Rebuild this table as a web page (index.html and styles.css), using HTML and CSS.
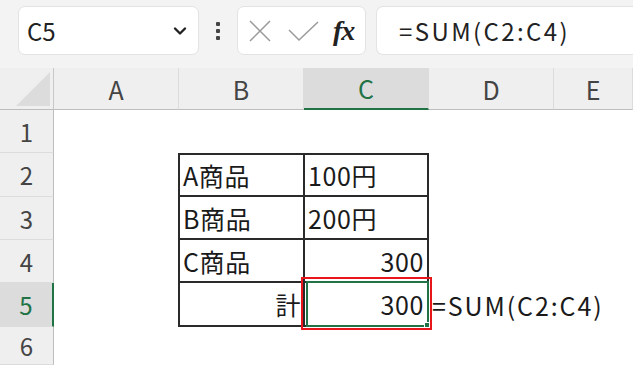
FILE: index.html
```html
<!DOCTYPE html>
<html lang="ja">
<head>
<meta charset="utf-8">
<link rel="stylesheet" href="styles.css">
</head>
<body>
<div class="toolbar">
  <div class="namebox">
    <span class="name">C5</span>
    <svg class="chev" width="14" height="10" viewBox="0 0 14 10"><path d="M2 2.5 L7 7.5 L12 2.5" fill="none" stroke="#222" stroke-width="2.4" stroke-linecap="round" stroke-linejoin="round"/></svg>
  </div>
  <div class="dots"><span></span><span></span><span></span></div>
  <div class="fxbox">
    <svg width="24" height="24" viewBox="0 0 24 24"><path d="M2 2 L22 22 M22 2 L2 22" stroke="#9a9a9a" stroke-width="1.5" fill="none"/></svg>
    <svg width="31" height="22" viewBox="0 0 31 22"><path d="M1 10 L11 20 L30 2" stroke="#9a9a9a" stroke-width="1.5" fill="none"/></svg>
    <span class="fx">fx</span>
  </div>
  <div class="formula">=SUM(C2:C4)</div>
</div>
<div class="sheet">
  <div class="corner"><div class="tri"></div></div>
  <div class="colh">A</div>
  <div class="colh">B</div>
  <div class="colh sel">C</div>
  <div class="colh">D</div>
  <div class="colh">E</div>

  <div class="rowh">1</div>
  <div class="cell"></div><div class="cell"></div><div class="cell"></div><div class="cell"></div><div class="cell"></div>

  <div class="rowh">2</div>
  <div class="cell"></div>
  <div class="cell t tb tl tt">A商品</div>
  <div class="cell t tb tl tt tr">100円</div>
  <div class="cell"></div><div class="cell"></div>

  <div class="rowh">3</div>
  <div class="cell"></div>
  <div class="cell t tb tl">B商品</div>
  <div class="cell t tb tl tr">200円</div>
  <div class="cell"></div><div class="cell"></div>

  <div class="rowh">4</div>
  <div class="cell"></div>
  <div class="cell t tb tl">C商品</div>
  <div class="cell t tb tl tr num">300</div>
  <div class="cell"></div><div class="cell"></div>

  <div class="rowh sel">5</div>
  <div class="cell"></div>
  <div class="cell t tb tl num">計</div>
  <div class="cell t tb tl tr num active">300
    <div class="green"><div class="handle"></div></div>
    <div class="red"></div>
  </div>
  <div class="cell t over">=SUM(C2:C4)</div><div class="cell"></div>

  <div class="rowh">6</div>
  <div class="cell"></div><div class="cell"></div><div class="cell"></div><div class="cell"></div><div class="cell"></div>
</div>
</body>
</html>
```
FILE: styles.css
```css
* { box-sizing: border-box; }
html, body { margin: 0; padding: 0; }
body {
  width: 633px;
  height: 365px;
  overflow: hidden;
  background: #fff;
  font-family: "Noto Sans CJK JP", "Noto Sans", sans-serif;
  color: #222;
}
.toolbar {
  height: 68px;
  background: #f3f3f3;
  display: flex;
  align-items: flex-start;
  padding-top: 6px;
  padding-left: 18px;
}
.namebox {
  width: 181px;
  height: 49px;
  background: #fff;
  border: 1px solid #e3e3e3;
  border-radius: 7px;
  display: flex;
  align-items: center;
  justify-content: space-between;
  padding: 0 11px 0 8px;
}
.name { font-size: 24px; color: #222; line-height: 1; }
.dots {
  width: 38px;
  height: 49px;
  display: flex;
  flex-direction: column;
  align-items: center;
  justify-content: center;
  gap: 3px;
}
.dots span { width: 4px; height: 4px; background: #444; border-radius: 1px; }
.fxbox {
  width: 129px;
  height: 49px;
  background: #fff;
  border: 1px solid #e3e3e3;
  border-radius: 7px;
  display: flex;
  align-items: center;
  padding-left: 10px;
  gap: 16px;
}
.fx {
  font-family: "Liberation Serif", "DejaVu Serif", serif;
  font-style: italic;
  font-weight: bold;
  font-size: 28px;
  color: #222;
  margin-left: -2px;
  letter-spacing: -1px;
}
.formula {
  margin-left: 10px;
  flex: 1;
  height: 49px;
  background: #fff;
  border: 1px solid #e3e3e3;
  border-right: none;
  border-radius: 7px 0 0 7px;
  display: flex;
  align-items: center;
  padding-left: 22px;
  font-size: 24px;
  letter-spacing: 2.4px;
  color: #222;
}
.sheet {
  display: grid;
  grid-template-columns: 54px 125px 125px 125px 125px 1fr;
  grid-template-rows: 42px 43px 44px 43px 43px 44px 38px;
}
.corner {
  background: #efefef;
  border-right: 1px solid #c8c8c8;
  border-bottom: 1px solid #bdbdbd;
  position: relative;
}
.tri {
  position: absolute;
  right: 3px;
  bottom: 3px;
  width: 34px;
  height: 34px;
  background: #dcdcdc;
  clip-path: polygon(100% 0, 100% 100%, 0 100%);
}
.colh {
  background: #efefef;
  border-right: 1px solid #dcdcdc;
  border-bottom: 1px solid #bdbdbd;
  display: flex;
  align-items: center;
  justify-content: center;
  font-size: 25px;
  color: #444;
}
.colh.sel {
  background: #dcdcdc;
  color: #217346;
  border-bottom: 2px solid #217346;
}
.rowh {
  background: #efefef;
  border-right: 1px solid #bdbdbd;
  border-bottom: 1px solid #dcdcdc;
  display: flex;
  align-items: center;
  justify-content: center;
  font-size: 24px;
  color: #444;
}
.rowh.sel {
  background: #dcdcdc;
  color: #217346;
  border-right: 2px solid #217346;
}
.cell { background: #fff; }
.t {
  display: flex;
  align-items: center;
  font-size: 25px;
  letter-spacing: 0.6px;
  color: #1a1a1a;
  padding: 0 3px 0 3px;
  white-space: nowrap;
}
.tl { border-left: 2px solid #2a2a2a; margin-left: -1px; }
.tt { border-top: 2px solid #2a2a2a; }
.tb { border-bottom: 2px solid #2a2a2a; }
.tr { border-right: 2px solid #2a2a2a; }
.num { justify-content: flex-end; }
.over { padding-left: 3px; letter-spacing: 1.9px; position: relative; z-index: 1; background: transparent; }
.active { position: relative; z-index: 3; }
.green {
  position: absolute;
  left: 1px;
  top: -2px;
  right: -2px;
  bottom: -2px;
  border: 2px solid #217346;
}
.handle {
  position: absolute;
  right: -3px;
  bottom: -3px;
  width: 6px;
  height: 6px;
  background: #217346;
  border: 1px solid #fff;
}
.red {
  position: absolute;
  left: -4px;
  top: -6px;
  right: -5px;
  bottom: -5px;
  border: 2px solid #e8151b;
}
```
